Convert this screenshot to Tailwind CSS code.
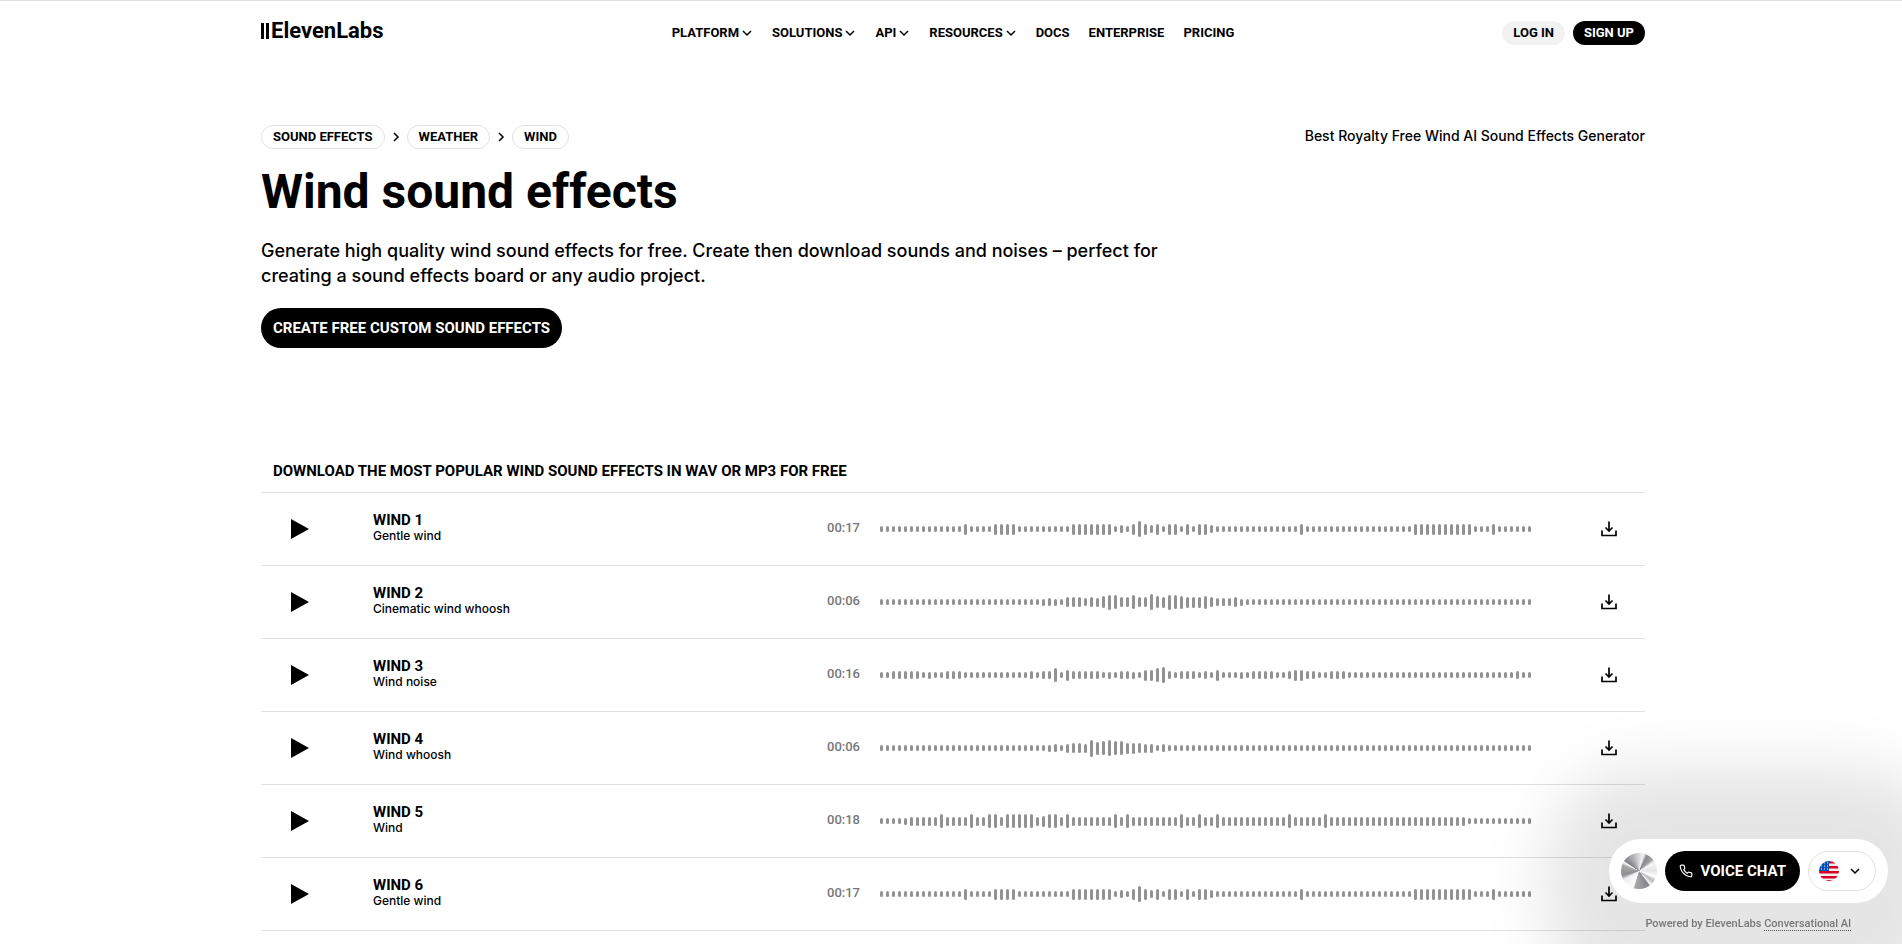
<!DOCTYPE html>
<html lang="en">
<head>
  <meta charset="UTF-8">
  <title>Wind sound effects</title>
  <script src="https://cdn.jsdelivr.net/npm/@tailwindcss/browser@4"></script>
</head>
<body class="bg-white text-black font-[Inter,sans-serif] overflow-x-hidden [scrollbar-width:none]">
  <svg class="hidden">
    <symbol id="chevron" viewBox="0 0 12 12"><path d="M2 4l4 4 4-4" fill="none" stroke="currentColor" stroke-width="1.5" /></symbol>
    <symbol id="arrow" viewBox="0 0 12 12"><path d="M4 2l4 4-4 4" fill="none" stroke="currentColor" stroke-width="1.5" /></symbol>
    <symbol id="download" viewBox="0 0 16 16">
      <path d="M8 0.500v9.500M4.500 6.500L8 10l3.500-3.500M1 9.500v5h14v-5" fill="none" stroke="currentColor" stroke-width="1.7" />
    </symbol>
  </svg>

  <div class="border-t border-[#e1e1e1] pl-1">
    <!-- header -->
    <header class="mx-auto flex h-16 max-w-[1384px] items-center justify-between font-[Roboto,sans-serif]">
      <a href="#" class="flex w-[306px] items-center pb-1 text-[22px] font-bold leading-6" aria-label="ElevenLabs">
        <svg class="mr-0.5 h-4 w-2" viewBox="0 0 8 16"><path d="M0 0h3v16h-3zM5 0h3v16h-3z" /></svg>ElevenLabs
      </a>
      <nav class="flex items-center gap-[19px] text-[13px] font-bold">
        <button class="flex items-center gap-0.5">PLATFORM <svg class="size-3"><use href="#chevron" /></svg></button>
        <button class="flex items-center gap-0.5">SOLUTIONS <svg class="size-3"><use href="#chevron" /></svg></button>
        <button class="flex items-center gap-0.5">API <svg class="size-3"><use href="#chevron" /></svg></button>
        <button class="flex items-center gap-0.5">RESOURCES <svg class="size-3"><use href="#chevron" /></svg></button>
        <a href="#">DOCS</a>
        <a href="#">ENTERPRISE</a>
        <a href="#">PRICING</a>
      </nav>
      <div class="flex w-[306px] justify-end gap-2 text-[13px] font-bold">
        <a href="#" class="flex h-6 items-center rounded-full bg-[#f2f2f2] px-[11px]">LOG IN</a>
        <a href="#" class="flex h-6 items-center rounded-full bg-black px-[11px] text-white">SIGN UP</a>
      </div>
    </header>

    <main class="mx-auto max-w-[1384px] pt-[60px]">
      <div class="flex items-center justify-between">
        <nav class="flex items-center gap-[5px] text-[13px] font-bold font-[Roboto,sans-serif]" aria-label="Breadcrumb">
          <a href="#" class="flex h-6 items-center rounded-full border border-[#e1e1e1] px-[11px]">SOUND EFFECTS</a>
          <svg class="size-3"><use href="#arrow" /></svg>
          <a href="#" class="flex h-6 items-center rounded-full border border-[#e1e1e1] px-[11px]">WEATHER</a>
          <svg class="size-3"><use href="#arrow" /></svg>
          <a href="#" class="flex h-6 items-center rounded-full border border-[#e1e1e1] px-[11px]">WIND</a>
        </nav>
        <p class="pb-0.5 text-sm font-medium">Best Royalty Free Wind AI Sound Effects Generator</p>
      </div>
      <h1 class="mt-[17px] text-5xl font-bold leading-[52px] font-[Roboto,sans-serif]">Wind sound effects</h1>
      <p class="mt-5 max-w-[920px] text-lg leading-[25px] font-medium">Generate high quality wind sound effects for free. Create then download sounds and noises – perfect for creating a sound effects board or any audio project.</p>
      <a href="#" class="mt-5 inline-flex h-10 items-center rounded-full bg-black px-3 text-[15px] font-bold text-white font-[Roboto,sans-serif]">CREATE FREE CUSTOM SOUND EFFECTS</a>

      <!-- sound list -->
      <section class="mt-[113px]">
        <h2 class="border-b border-[#e1e1e1] px-3 pb-[11px] text-[15px] leading-5 font-bold font-[Roboto,sans-serif]">DOWNLOAD THE MOST POPULAR WIND SOUND EFFECTS IN WAV OR MP3 FOR FREE</h2>
        <ul id="sounds"></ul>
      </section>
    </main>
  </div>

  <template id="row">
    <li class="flex h-[73px] items-center border-b border-[#e1e1e1] pr-7 pl-[30px]">
      <button class="w-[82px]" aria-label="Play"><svg class="h-5 w-[18px]" viewBox="0 0 18 20"><path d="M0 0l18 10-18 10z" /></svg></button>
      <div class="flex-1 pb-0.5">
        <h3 class="text-[15px] leading-4 font-bold font-[Roboto,sans-serif]"></h3>
        <p class="text-xs leading-4 font-medium"></p>
      </div>
      <time class="mr-5 pb-0.5 text-[13px] leading-4 font-medium text-[#777] font-[Roboto,sans-serif]"></time>
      <div data-wave class="mr-[70px] flex w-[651px] items-center justify-between"></div>
      <button aria-label="Download"><svg class="size-4"><use href="#download" /></svg></button>
    </li>
  </template>

  <!-- voice chat widget -->
  <aside class="fixed right-3.5 bottom-3 flex flex-col items-center">
    <div class="pointer-events-none absolute -inset-x-16 -inset-y-[72px] -z-10 rounded-[100px] bg-black/10 blur-[30px]"></div>
    <div class="flex h-16 items-center gap-2 rounded-full bg-white px-3">
      <span class="size-9 rounded-full bg-[conic-gradient(#d8d8d8,#f4f4f4_15deg,#88898c_28deg,#a0a0a3_48deg,#f4f4f4_60deg,#e4e4e4_90deg,#fff_110deg,#b8b8ba_125deg,#f4f4f4_140deg,#85868a_146deg,#a8a8aa_194deg,#fff_200deg,#eee_240deg,#8d8e91_255deg,#a8a8aa_290deg,#fff_300deg,#808185_306deg,#b0b0b2_335deg,#d8d8d8)]"></span>
      <button class="flex h-10 items-center gap-2 rounded-full bg-black px-3.5 text-[15px] font-bold text-white font-[Roboto,sans-serif]">
        <svg class="size-3.5" viewBox="0 0 24 24" fill="none" stroke="currentColor" stroke-width="2"><path d="M22 16.920v3a2 2 0 0 1-2.180 2 19.790 19.790 0 0 1-8.630-3.070 19.500 19.500 0 0 1-6-6 19.790 19.790 0 0 1-3.070-8.670A2 2 0 0 1 4.110 2h3a2 2 0 0 1 2 1.720c.13.96.36 1.900.7 2.810a2 2 0 0 1-.45 2.110L8.090 9.910a16 16 0 0 0 6 6l1.270-1.270a2 2 0 0 1 2.110-.45c.91.34 1.850.57 2.810.7A2 2 0 0 1 22 16.920z" /></svg>
        VOICE CHAT
      </button>
      <button class="flex h-10 w-[68px] items-center gap-2.5 rounded-full border border-[#e1e1e1] pl-2.5" aria-label="Language">
        <svg class="size-5 rounded-full" viewBox="0 0 20 20">
          <path d="M0 0h20v20H0z" fill="#f0f0f0" />
          <path d="M10 0h10v2.500H10zM10 5h10v2.500H10zM0 10h20v2.500H0zM0 15h20v2.500H0zM5 19h10v1H5z" fill="#d80027" />
          <path d="M0 0h10v10H0z" fill="#0052b4" />
          <path d="M5 2h1M8 2h1M2 5h1M5 5h1M8 5h1M2 8h1M5 8h1M8 8h1" stroke="#f0f0f0" />
        </svg>
        <svg class="size-3"><use href="#chevron" /></svg>
      </button>
    </div>
    <p class="mt-[13px] text-[11px] leading-4 font-medium text-[#777] font-[Roboto,sans-serif]">Powered by ElevenLabs <a href="#" class="border-b border-dotted border-[#555]">Conversational AI</a></p>
  </aside>

  <script>
    // wave: bar heights, "6x14" stands for 14 bars of 6px
    const gentle = '6x14 11 6x4 11x4 6x9 11x7 6 8 6 11 16 11 8 11 6 11x2 6 11 6 11x2 8 6x14 11 6x18 11x10 6x3 11 6x6';
    const sounds = [
      ['WIND 1', 'Gentle wind', '00:17', gentle],
      ['WIND 2', 'Cinematic wind whoosh', '00:06', '6x27 7 8 7 6 10x3 8 10 9 12 15 14 10x2 14 10x2 16 12 11 15 14 13 11x3 13 10 8x3 10 7 6x48'],
      ['WIND 3', 'Wind noise', '00:16', '6x2 8x5 6 7 6x2 8x3 6x11 8 6 8x2 14 6 11 8x5 6 7 6 8x2 7 6 11x2 14 16 8 6 8x3 6 8 6 11 6x3 7 6 8x4 6x2 8 11x2 8x2 6x2 8x3 6x28 8 6x2'],
      ['WIND 4', 'Wind whoosh', '00:06', '6x28 7 8 6 9 10x2 9 17 13 14 16 14x2 11x2 10 9x2 6 8 6x61'],
      ['WIND 5', 'Wind', '00:18', '6x4 7 9x5 14 9x4 14 9x2 14x2 9 14x5 9 11 14x2 9 14 9x7 14 9 14 9x8 14 9x2 14 9x2 14 9x11 14 9x5 14 9x23 6x11'],
      ['WIND 6', 'Gentle wind', '00:17', gentle],
    ];

    for (const [title, text, time, wave] of sounds) {
      const row = document.getElementById('row').content.cloneNode(true);
      row.querySelector('h3').textContent = title;
      row.querySelector('p').textContent = text;
      row.querySelector('time').textContent = time;
      const box = row.querySelector('[data-wave]');
      wave.split(' ').forEach((run) => {
        const [height, count = 1] = run.split('x').map(Number);
        for (let i = 0; i < count; i++) {
          const bar = document.createElement('span');
          bar.className = 'w-[3px] rounded-full bg-[#929292]';
          bar.style.height = height + 'px';
          box.append(bar);
        }
      });
      document.getElementById('sounds').append(row);
    }
  </script>
</body>
</html>
